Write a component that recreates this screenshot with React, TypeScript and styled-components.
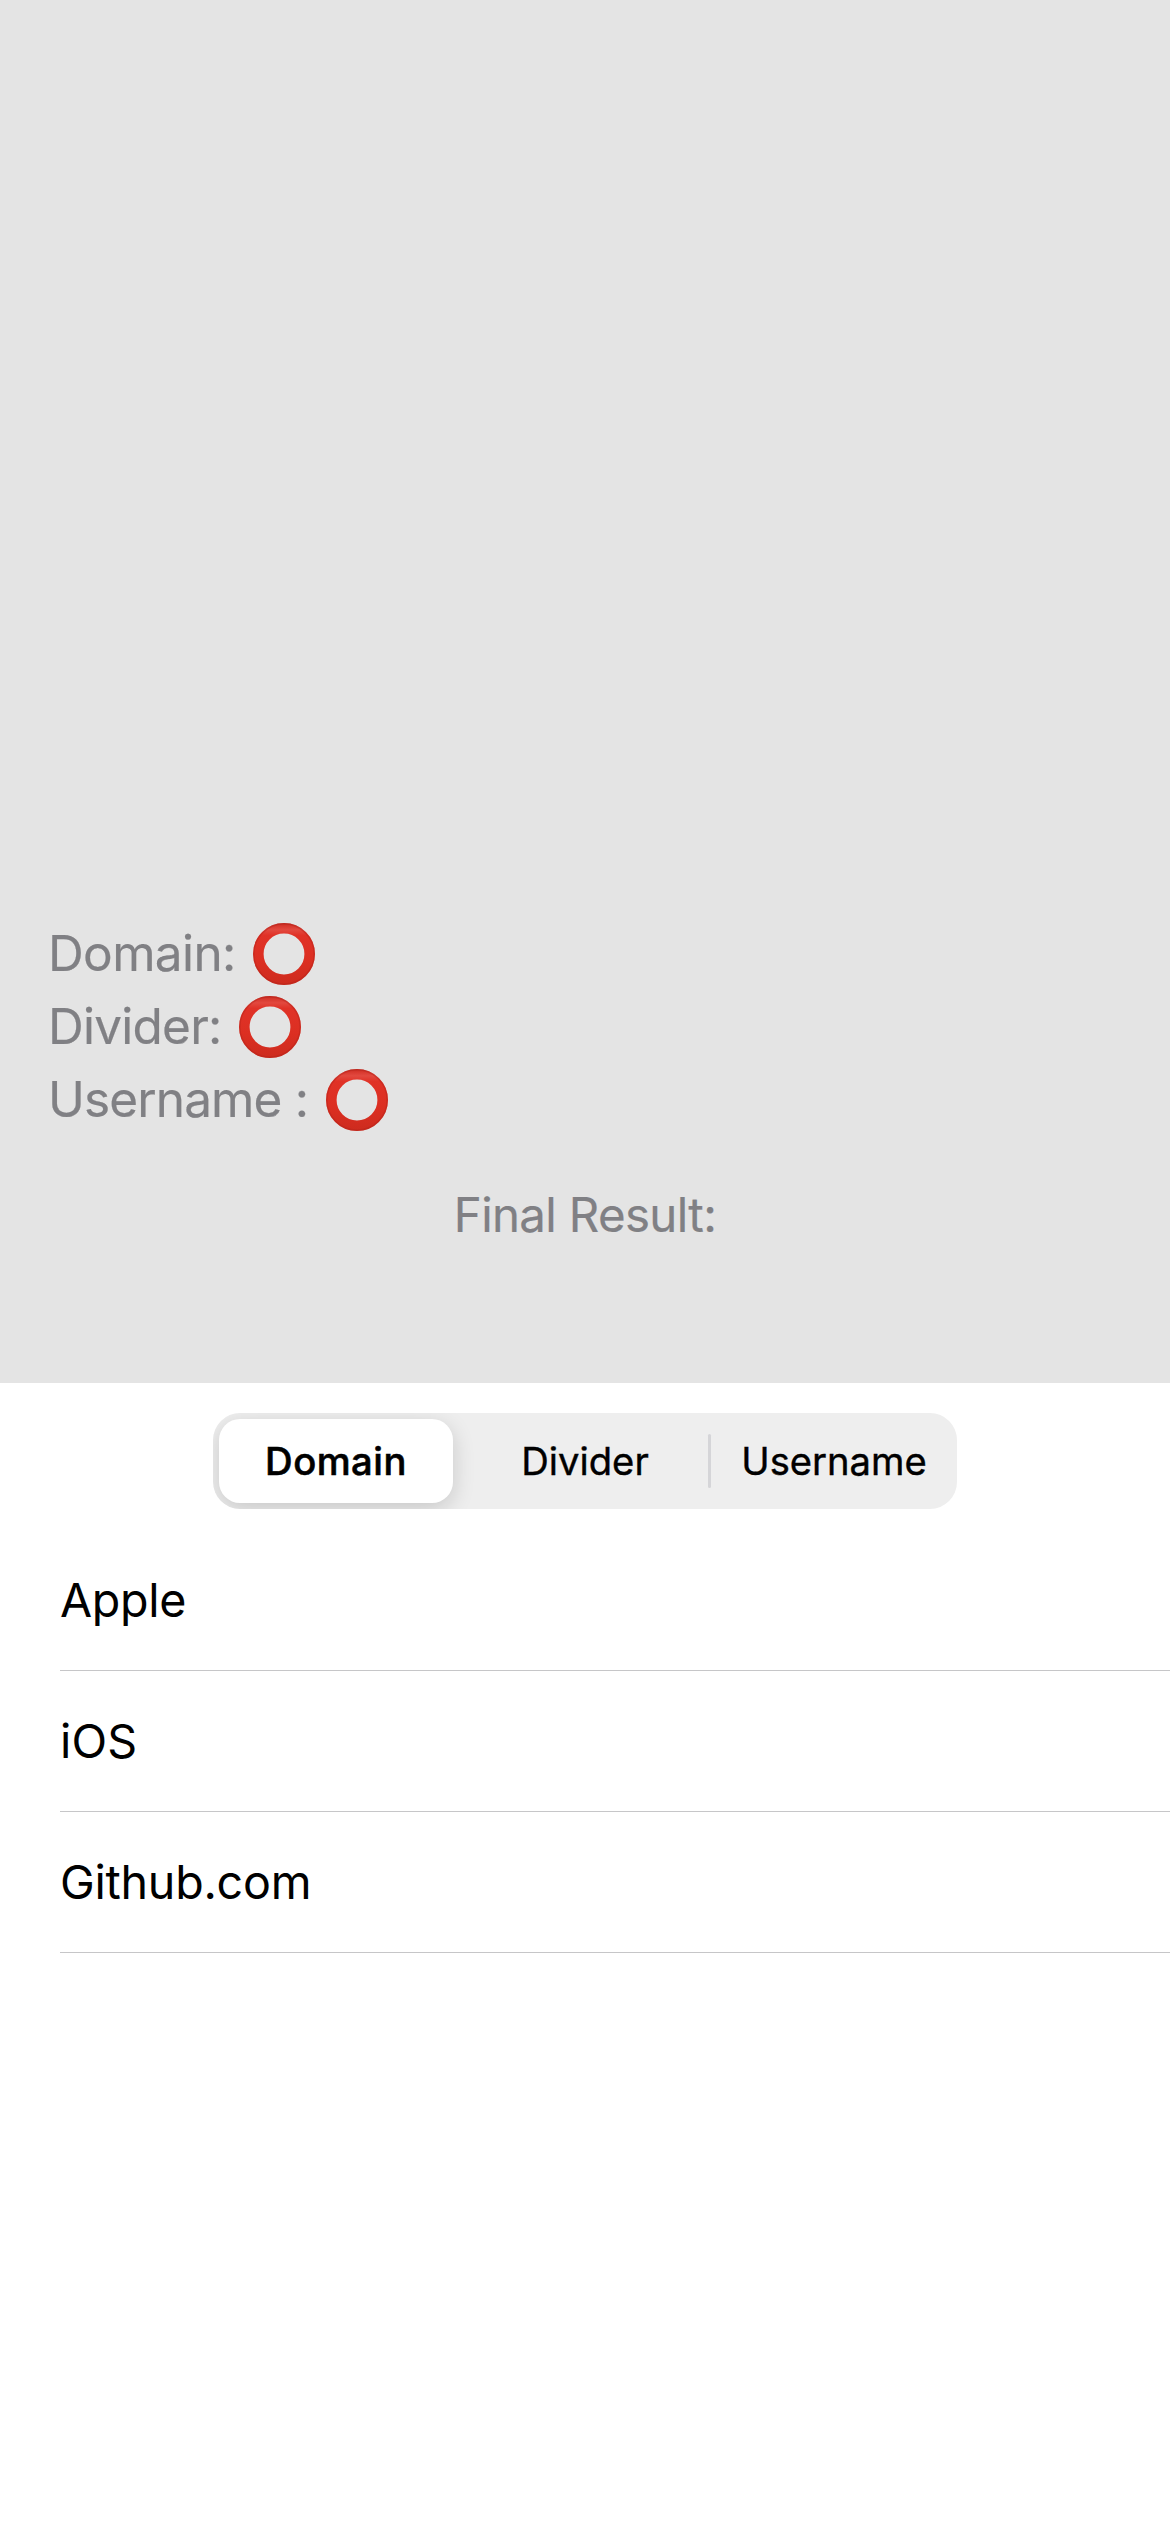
import React, { useState } from 'react';
import styled, { createGlobalStyle } from 'styled-components';

const GlobalStyle = createGlobalStyle`
  * { box-sizing: border-box; }
  body {
    margin: 0;
    background: #fff;
    font-family: Inter, "Liberation Sans", sans-serif;
  }
`;

const Screen = styled.main`
  display: flex;
  flex-direction: column;
  width: 1170px;
  height: 2532px;
  overflow: hidden;
  background: #fff;
`;

const Summary = styled.section`
  display: flex;
  flex-direction: column;
  justify-content: flex-end;
  height: 1383px;
  padding: 0 48px 138px;
  background: #e4e4e4;
  color: #808084;
`;

const Status = styled.div<{ $tracking: number }>`
  display: flex;
  align-items: center;
  height: 73px;
  font-size: 49.5px;
  line-height: 73px;
  letter-spacing: ${(p) => p.$tracking}px;
  white-space: pre;
  -webkit-text-stroke: 0.2px currentColor;
`;

const Ring = styled.svg<{ $gap: number }>`
  flex: none;
  width: 62px;
  height: 62px;
  margin-left: ${(p) => p.$gap}px;
`;

const Result = styled.div`
  height: 60px;
  margin-top: 49px;
  font-size: 47.4px;
  line-height: 60px;
  letter-spacing: -0.64px;
  text-align: center;
  -webkit-text-stroke: 0.2px currentColor;
`;

const Segments = styled.div`
  display: flex;
  align-items: center;
  align-self: center;
  width: 744px;
  height: 96px;
  margin-top: 30px;
  padding: 6px;
  border-radius: 27px;
  overflow: hidden;
  background: #eeeeee;
`;

const Segment = styled.button<{ $active: boolean }>`
  width: 234px;
  height: 84px;
  padding: 0;
  border: 0;
  border-radius: 21px;
  background: ${(p) => (p.$active ? '#fff' : 'transparent')};
  box-shadow: ${(p) => (p.$active ? '0 6px 22px rgba(0,0,0,.16)' : 'none')};
  color: #000;
  font-family: inherit;
  font-size: 38.2px;
  font-weight: ${(p) => (p.$active ? 500 : 400)};
  line-height: 84px;
  letter-spacing: ${(p) => (p.$active ? 0.5 : 0)}px;
  -webkit-text-stroke: ${(p) => (p.$active ? 0.6 : 0.4)}px currentColor;
`;

const Separator = styled.span<{ $visible: boolean }>`
  width: 3px;
  height: 54px;
  margin: 0 6px;
  border-radius: 1.5px;
  background: ${(p) => (p.$visible ? '#d5d5d8' : 'transparent')};
`;

const List = styled.ul`
  margin: 21px 0 0;
  padding: 0 0 0 60px;
  list-style: none;
`;

const Item = styled.li<{ $tracking: number }>`
  height: 141px;
  border-bottom: 1px solid #c6c6c8;
  font-size: 46.6px;
  line-height: 141px;
  letter-spacing: ${(p) => p.$tracking}px;
  color: #000;
`;

const statuses = [
  { label: 'Domain:', tracking: -0.63, gap: 17.4 },
  { label: 'Divider:', tracking: -0.76, gap: 17.5 },
  { label: 'Username :', tracking: -0.86, gap: 17.9 },
];

const tabs = ['Domain', 'Divider', 'Username'];

const domains = [
  { name: 'Apple', tracking: -0.3 },
  { name: 'iOS', tracking: 0.2 },
  { name: 'Github.com', tracking: -0.25 },
];

function RedRing({ id, gap }: { id: string; gap: number }) {
  return (
    <Ring $gap={gap} viewBox="0 0 62 62" aria-hidden="true">
      <defs>
        <linearGradient id={id} x1="0" y1="0" x2="0" y2="62" gradientUnits="userSpaceOnUse">
          <stop offset="0" stopColor="#c62a20" />
          <stop offset=".05" stopColor="#d8392f" />
          <stop offset=".11" stopColor="#e2493f" />
          <stop offset=".2" stopColor="#e03227" />
          <stop offset=".6" stopColor="#dc2f22" />
          <stop offset="1" stopColor="#cd2b1e" />
        </linearGradient>
      </defs>
      <circle cx="31" cy="31" r="25.7" fill="none" stroke={`url(#${id})`} strokeWidth="10.6" />
      <circle cx="31" cy="31" r="30.2" fill="none" stroke="#b3241a" strokeOpacity=".45" strokeWidth="1.4" />
    </Ring>
  );
}

export default function App() {
  const [active, setActive] = useState(0);
  return (
    <>
      <GlobalStyle />
      <Screen>
        <Summary>
          {statuses.map((s, i) => (
            <Status key={s.label} $tracking={s.tracking}>
              {s.label}
              <RedRing id={`ring-${i}`} gap={s.gap} />
            </Status>
          ))}
          <Result>Final Result:</Result>
        </Summary>
        <Segments>
          {tabs.map((label, i) => (
            <React.Fragment key={label}>
              {i > 0 && <Separator $visible={active !== i && active !== i - 1} />}
              <Segment $active={active === i} onClick={() => setActive(i)}>
                {label}
              </Segment>
            </React.Fragment>
          ))}
        </Segments>
        <List>
          {domains.map((d) => (
            <Item key={d.name} $tracking={d.tracking}>{d.name}</Item>
          ))}
        </List>
      </Screen>
    </>
  );
}
